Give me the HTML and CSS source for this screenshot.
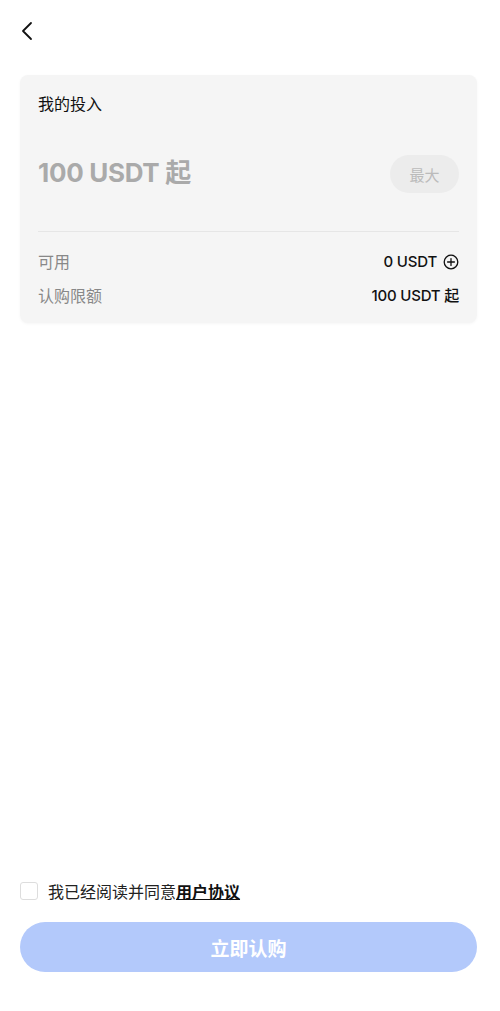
FILE: index.html
```html
<!DOCTYPE html>
<html lang="zh-CN">
<head>
    <meta charset="UTF-8">
    <meta name="viewport" content="width=device-width, initial-scale=1.0">
    <title>认购</title>
    <link rel="stylesheet" href="styles.css">
</head>
<body>
    <div class="page">
        <div class="header">
            <svg class="back" width="14" height="20" viewBox="0 0 14 20">
                <path d="M11 2 L3 10 L11 18" fill="none" stroke="#111" stroke-width="1.8" stroke-linecap="round" stroke-linejoin="round"/>
            </svg>
        </div>
        <div class="card">
            <div class="card-title">我的投入</div>
            <div class="amount-row">
                <div class="amount">100 USDT 起</div>
                <button class="max-btn">最大</button>
            </div>
            <div class="divider"></div>
            <div class="info-row">
                <span class="info-label">可用</span>
                <span class="info-value">0 USDT
                    <svg width="16" height="16" viewBox="0 0 16 16">
                        <circle cx="8" cy="8" r="6.8" fill="none" stroke="#111" stroke-width="1.3"/>
                        <path d="M8 4.6 V11.4 M4.6 8 H11.4" stroke="#111" stroke-width="1.3" stroke-linecap="round"/>
                    </svg>
                </span>
            </div>
            <div class="info-row">
                <span class="info-label">认购限额</span>
                <span class="info-value">100 USDT 起</span>
            </div>
        </div>
        <div class="footer">
            <label class="agree">
                <span class="checkbox"></span>
                <span>我已经阅读并同意<a class="agreement">用户协议</a></span>
            </label>
            <button class="submit">立即认购</button>
        </div>
    </div>
</body>
</html>
```

FILE: styles.css
```css
body {
    margin: 0;
    font-family: "Inter", "Noto Sans CJK SC", sans-serif;
    background: #fff;
    color: #111;
}
.page {
    display: flex;
    flex-direction: column;
    height: 1011px;
    padding: 0 23px 0 20px;
    box-sizing: border-box;
}
.header {
    height: 62px;
    display: flex;
    align-items: center;
}
.back {
    display: block;
}
.card {
    margin-top: 13px;
    background: #f5f5f5;
    border-radius: 8px;
    padding: 19px 18px 17px;
    box-shadow: 0 1px 3px rgba(0, 0, 0, 0.04);
}
.card-title {
    font-size: 16px;
    line-height: 20px;
    color: #111;
}
.amount-row {
    margin-top: 41px;
    height: 38px;
    display: flex;
    align-items: center;
    justify-content: space-between;
}
.amount {
    font-size: 26px;
    line-height: 32px;
    font-weight: 700;
    color: #aaa;
    letter-spacing: -0.3px;
    margin-top: -2px;
}
.max-btn {
    width: 69px;
    height: 38px;
    border: none;
    border-radius: 19px;
    background: #ececec;
    color: #bbb;
    font-size: 15px;
    font-family: inherit;
}
.divider {
    margin-top: 38px;
    height: 1px;
    background: #e6e6e6;
}
.info-row {
    display: flex;
    justify-content: space-between;
    align-items: center;
    height: 20px;
    line-height: 20px;
    font-size: 16px;
    margin-top: 14px;
}
.divider + .info-row {
    margin-top: 20px;
}
.info-label {
    color: #888;
}
.info-value {
    display: flex;
    align-items: center;
    gap: 6px;
    color: #111;
    font-size: 15px;
    font-weight: 500;
    letter-spacing: -0.2px;
}
.footer {
    margin-top: auto;
    padding-bottom: 39px;
}
.agree {
    display: flex;
    align-items: center;
    gap: 10px;
    font-size: 16px;
    color: #222;
    height: 20px;
}
.checkbox {
    width: 16px;
    height: 16px;
    border: 1px solid #ddd;
    border-radius: 3px;
    background: #fff;
}
.agreement {
    color: #111;
    font-weight: 700;
    text-decoration: underline;
}
.submit {
    display: block;
    width: 100%;
    height: 50px;
    margin-top: 21px;
    border: none;
    border-radius: 25px;
    background: #b3c9fb;
    color: #fff;
    font-size: 19px;
    font-weight: 600;
    font-family: inherit;
}
```
